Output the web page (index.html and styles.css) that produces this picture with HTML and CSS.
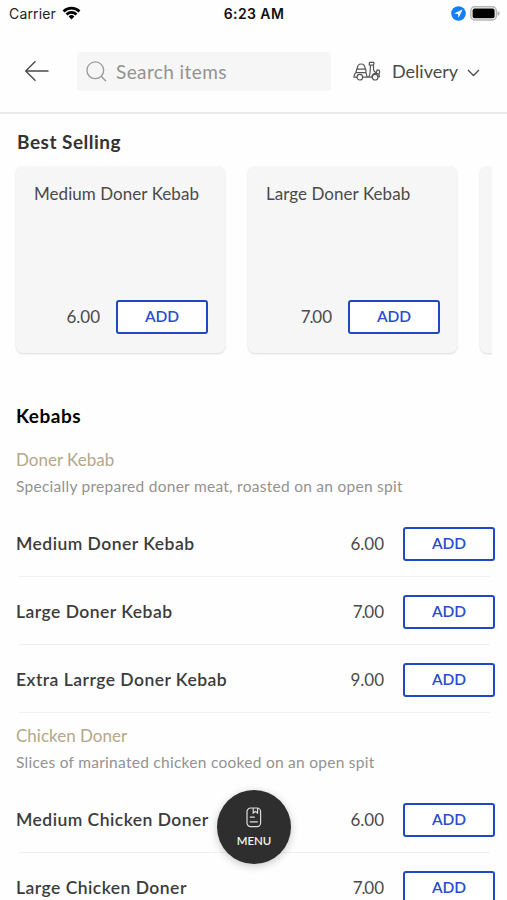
FILE: index.html
```html
<!DOCTYPE html>
<html lang="en">
<head>
<meta charset="utf-8">
<title>Menu</title>
<link rel="stylesheet" href="styles.css">
</head>
<body>
<div class="screen">
  <div class="status">
    <div class="status-left"><span class="carrier">Carrier</span>
      <svg width="19" height="14" viewBox="0 0 19 14"><path d="M0.6 4.5a12.6 12.6 0 0 1 17.8 0l-1.9 1.9a9.9 9.9 0 0 0-14 0zM3.6 7.5a8.3 8.3 0 0 1 11.8 0l-1.9 1.9a5.7 5.7 0 0 0-8 0zM6.6 10.4a4.1 4.1 0 0 1 5.8 0l-2.9 3z"/></svg>
    </div>
    <span class="time">6:23 AM</span>
    <div class="status-right">
      <svg width="15" height="15" viewBox="0 0 15 15"><circle cx="7.5" cy="7.5" r="7.3" fill="#147efb"/><path d="M11.6 3.5 3 7.5l4.1.5.4 4.1z" fill="#fff"/></svg>
      <svg width="31" height="15" viewBox="0 0 31 15"><rect x=".8" y=".8" width="25.5" height="13.2" rx="4" fill="#fff" stroke="#b4b4b4" stroke-width="1.5"/><rect x="2.6" y="2.6" width="22" height="9.7" rx="1.8"/><path d="M27.6 5v5q2-.8 2-2.5t-2-2.5" fill="#aaa"/></svg>
    </div>
  </div>
  <header class="header">
    <svg class="back" width="26" height="22" viewBox="0 0 26 22"><path d="M24.5 11H2M11.5 1.2 1.7 11l9.8 9.8" fill="none" stroke="#4a4a4a" stroke-width="1.4"/></svg>
    <div class="search">
      <svg width="21" height="21" viewBox="0 0 21 21" fill="none" stroke="#999" stroke-width="1.3"><circle cx="9.3" cy="9.3" r="8.4"/><path d="m15.2 15.3 4.8 4.9"/></svg>
      <span>Search items</span>
    </div>
    <div class="mode">
      <svg width="28" height="20" viewBox="0 0 28 20" fill="none" stroke="#555" stroke-width="1.2" stroke-linejoin="round" stroke-linecap="round"><path d="M4.2 8.2Q4.2 3 8.2 3t4 5.2M3.6 8.2h9.2M3.6 8.2 3 11.6h10l-.2-3.4M3 11.6Q1 13 .9 16.2h2.8M13 11.6l1.2 4.6h-4M14.2 16.2h4.6M15.8 16.2q1.4-3.4 1.4-7l.3-5-1.3-.3.3-2.6h4.2q1 1.2-.2 2.4v5q.4 2.1 2.8 3.2M17.5 4.2h3M18.8 16.2q.6-3.6 4.2-4 3.2.3 3.5 3.4l-1.2.4M23.3 12l.8-3.2 2.2.5q.7 1.4-.1 3.4"/><circle cx="6.8" cy="16.2" r="2.8"/><circle cx="22.1" cy="16.2" r="2.8"/></svg>
      <span>Delivery</span>
      <svg class="chev" width="13" height="8" viewBox="0 0 13 8"><path d="m1 1 5.5 5.5L12 1" fill="none" stroke="#4a4a4a" stroke-width="1.3"/></svg>
    </div>
  </header>
  <main>
    <h2 class="best">Best Selling</h2>
    <div class="cards">
      <article class="card"><h3>Medium Doner Kebab</h3><div class="buy"><span class="price">6.00</span><button class="add">ADD</button></div></article>
      <article class="card"><h3>Large Doner Kebab</h3><div class="buy"><span class="price seven">7.00</span><button class="add">ADD</button></div></article>
      <article class="card"></article>
    </div>
    <h2 class="category">Kebabs</h2>
    <section>
      <div class="intro"><h4>Doner Kebab</h4><p>Specially prepared doner meat, roasted on an open spit</p></div>
      <div class="row"><span class="name">Medium Doner Kebab</span><span class="price">6.00</span><button class="add">ADD</button></div>
      <div class="row"><span class="name">Large Doner Kebab</span><span class="price seven">7.00</span><button class="add">ADD</button></div>
      <div class="row"><span class="name">Extra Larrge Doner Kebab</span><span class="price">9.00</span><button class="add">ADD</button></div>
    </section>
    <section>
      <div class="intro second"><h4>Chicken Doner</h4><p>Slices of marinated chicken cooked on an open spit</p></div>
      <div class="row"><span class="name">Medium Chicken Doner</span><span class="price">6.00</span><button class="add">ADD</button></div>
      <div class="row"><span class="name">Large Chicken Doner</span><span class="price seven">7.00</span><button class="add">ADD</button></div>
    </section>
  </main>
  <button class="menu">
    <svg width="16" height="21" viewBox="0 0 16 21" fill="none" stroke="#ddd" stroke-width="1.2"><rect x="1" y="1" width="13.6" height="18.6" rx="3.6"/><path d="M7.2 1v5l2.2-1.5L11.6 6V1M3.8 10.2h5M3.8 14.8h8"/></svg>
    <span>MENU</span>
  </button>
</div>
</body>
</html>
```
FILE: styles.css
```css
* { box-sizing: border-box; margin: 0; padding: 0; }
body { background: #fff; font-family: Lato, "Liberation Sans", sans-serif; color: #4a4a4a; }
.screen { position: relative; width: 507px; height: 900px; overflow: hidden; background: #fefefe; }
svg { display: block; flex: none; }
button { font-family: inherit; border: 0; }
span, h2, h3, h4, p { white-space: nowrap; }

.status { display: grid; grid-template-columns: 1fr auto 1fr; align-items: center; height: 28px; padding: 0 6px 0 9px; font-family: Inter, sans-serif; color: #222; }
.status-left { display: flex; align-items: center; gap: 6px; margin-top: -2px; }
.status-left svg { margin-top: -1px; }
.carrier { font-size: 14px; letter-spacing: .15px; }
.time { margin-top: -2px; margin-right: 2px; font-size: 14px; font-weight: 600; letter-spacing: .4px; color: #111; }
.status-right { display: flex; justify-content: flex-end; align-items: center; gap: 4px; margin-top: -1px; }

.header { display: flex; align-items: center; height: 86px; padding: 2px 24px 0 24px; border-bottom: 2px solid #e8e8e8; }
.search { display: flex; flex: none; align-items: center; gap: 9px; width: 254px; height: 39px; margin-left: 27px; margin-top: 1px; padding-left: 9px; border-radius: 4px; background: #f6f6f6; color: #929292; font-size: 19px; letter-spacing: .4px; }
.mode { display: flex; align-items: center; margin-left: 22px; font-size: 18px; }
.mode span { margin-left: 11px; }
.chev { margin-left: 9px; margin-top: 3px; }

.best { height: 52px; padding: 16px 0 0 17px; font-size: 19px; line-height: 24px; font-weight: 700; letter-spacing: .5px; color: #333; }
.cards { display: flex; gap: 23px; width: 492px; height: 190px; padding-left: 16px; overflow: hidden; }
.card { flex: 0 0 209px; display: flex; flex-direction: column; justify-content: space-between; height: 187px; padding: 17px 17px 19px 18px; border-radius: 7px; background: #f6f6f6; box-shadow: 0 1px 2px rgba(0,0,0,.15); }
.card h3 { font-size: 17px; line-height: 22px; font-weight: 400; letter-spacing: .05px; }
.buy { display: flex; align-items: center; justify-content: flex-end; gap: 16px; }
.price { padding-bottom: 2px; font-size: 17px; }
.seven::first-letter { letter-spacing: -1.2px; }
.add { width: 92px; height: 34px; padding-bottom: 1px; border: 2px solid #2148c4; border-radius: 3px; background: #fff; color: #2a4cce; font-size: 15.5px; line-height: 29px; font-weight: 600; }

.category { height: 88px; padding: 48px 0 0 16px; font-size: 19px; line-height: 24px; font-weight: 700; letter-spacing: .5px; color: #000; }
.intro { height: 66px; padding: 4px 16px 0; }
.intro h4 { font-size: 17px; line-height: 24px; font-weight: 400; color: #b5a789; }
.intro p { margin-top: 2px; font-size: 15.5px; line-height: 24px; letter-spacing: .27px; color: #929292; }
.second { height: 72px; padding-top: 10px; }
.row { display: flex; align-items: center; height: 68px; padding: 0 12px 0 16px; background: linear-gradient(#f0f0f0, #f0f0f0) 19px 66px / 471px 1px no-repeat; }
.name { flex: 1; padding-bottom: 1px; font-size: 17.5px; font-weight: 600; letter-spacing: .47px; color: #3c3c3c; }
.row .add { margin-left: 19px; }

.menu { position: absolute; left: 217px; top: 790px; display: flex; flex-direction: column; align-items: center; width: 74px; height: 74px; padding-top: 17px; border-radius: 50%; background: #2e2e2e; color: #f4f4f4; box-shadow: 0 2px 8px rgba(0,0,0,.22); }
.menu span { margin-top: 5px; font-size: 11.5px; line-height: 15px; font-weight: 600; }
```
